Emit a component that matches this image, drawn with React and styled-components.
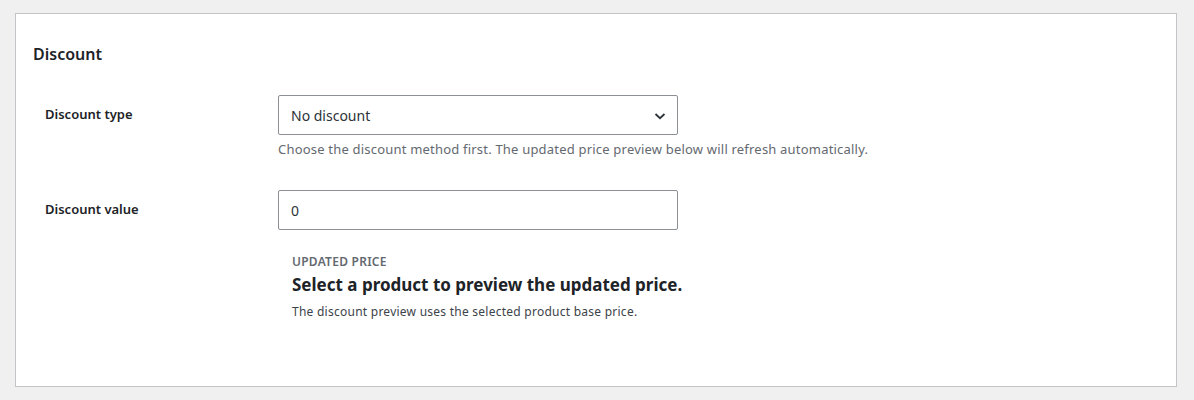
import React from "react";
import styled, { createGlobalStyle } from "styled-components";

const Global = createGlobalStyle`
  html, body { margin: 0; padding: 0; background: #f0f0f1; }
  body { font-family: "Noto Sans", "Open Sans", sans-serif; color: #1d2327; font-size: 13px; }
  * { box-sizing: border-box; }
`;

const Page = styled.div`
  padding: 13px 17px 13px 15px;
`;

const Card = styled.section`
  background: #fff;
  border: 1px solid #c3c4c7;
  height: 374px;
  padding: 28px 17px 0 17px;
`;

const Title = styled.h2`
  margin: 0 0 29px;
  font-size: 16px;
  font-weight: 600;
  line-height: 24px;
  color: #1d2327;
`;

const FormGrid = styled.div`
  display: grid;
  grid-template-columns: 233px 400px;
  padding-left: 12px;
  row-gap: 31px;
`;

const Label = styled.label`
  font-size: 13px;
  font-weight: 600;
  line-height: 38px;
  color: #1d2327;
`;

const Field = styled.div`
  display: flex;
  flex-direction: column;
`;

const Control = styled.div`
  position: relative;
  height: 40px;
  width: 400px;
  border: 1px solid #8c8f94;
  border-radius: 2px;
  background: #fff;
  display: flex;
  align-items: center;
  padding: 0 12px;
  font-size: 14px;
  color: #2c3338;
`;

const Chevron = styled.svg`
  position: absolute;
  right: 11px;
  top: 15px;
`;

const Help = styled.p`
  margin: 4px 0 0;
  font-size: 13px;
  letter-spacing: 0.2px;
  line-height: 20px;
  color: #646970;
  white-space: nowrap;
`;

const Preview = styled.div`
  padding: 24px 14px 0;
`;

const Eyebrow = styled.div`
  font-size: 12px;
  font-weight: 600;
  letter-spacing: 0.25px;
  text-transform: uppercase;
  color: #646970;
  line-height: 16px;
`;

const PriceHeading = styled.div`
  font-size: 17px;
  font-weight: 700;
  line-height: 24px;
  margin-top: 3px;
  color: #1d2327;
  white-space: nowrap;
`;

const Note = styled.div`
  font-size: 12px;
  letter-spacing: 0.25px;
  line-height: 18px;
  margin-top: 6px;
  color: #3c434a;
  white-space: nowrap;
`;

export default function App() {
  return (
    <>
      <Global />
      <Page>
        <Card>
          <Title>Discount</Title>
          <FormGrid>
            <Label>Discount type</Label>
            <Field>
              <Control>
                No discount
                <Chevron width="12" height="10" viewBox="0 0 12 10">
                  <path d="M1.5 3 L6 7.2 L10.5 3" fill="none" stroke="#2c3338" strokeWidth="1.8" />
                </Chevron>
              </Control>
              <Help>
                Choose the discount method first. The updated price preview below will refresh automatically.
              </Help>
            </Field>
            <Label>Discount value</Label>
            <Field>
              <Control>0</Control>
              <Preview>
                <Eyebrow>Updated price</Eyebrow>
                <PriceHeading>Select a product to preview the updated price.</PriceHeading>
                <Note>The discount preview uses the selected product base price.</Note>
              </Preview>
            </Field>
          </FormGrid>
        </Card>
      </Page>
    </>
  );
}
